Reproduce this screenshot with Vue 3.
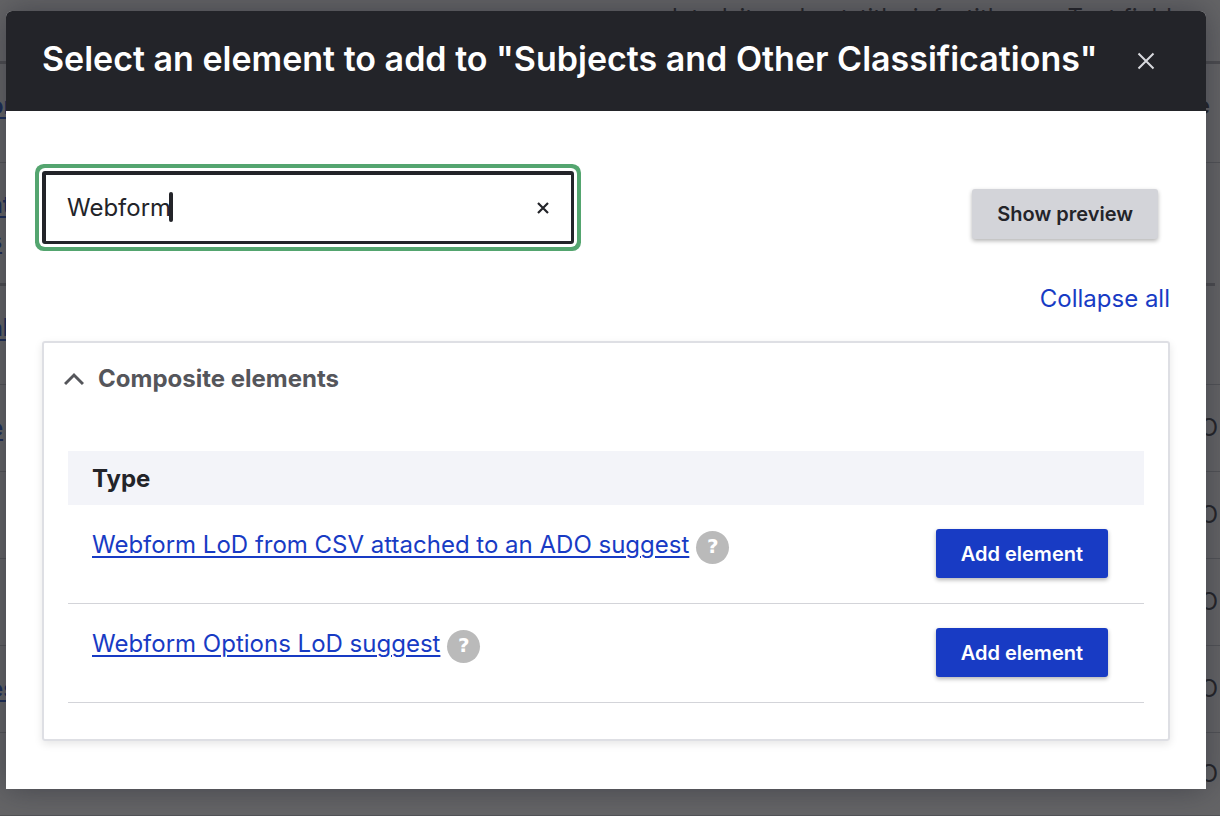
<script setup>
import { ref, computed } from 'vue'

const query = ref('Webform')
const open = ref(true)

const elements = [
  'Webform LoD from CSV attached to an ADO suggest',
  'Webform Options LoD suggest',
]

const shown = computed(() =>
  elements.filter((name) => name.toLowerCase().includes(query.value.toLowerCase()))
)

const pageRows = [
  { kind: 'first', link: '', key: 'related_item_host_title_info_title', type: 'Text field', end: '' },
  { kind: 'group', link: 'or', end: 'e' },
  { kind: 'heading', link: 'at s', end: '' },
  { kind: 'group', link: 'al', end: '' },
  { kind: 'item', link: 'e', end: 'O' },
  { kind: 'item', link: '', end: 'O' },
  { kind: 'item', link: '', end: 'O' },
  { kind: 'item', link: 'es', end: 'O' },
  { kind: 'last', link: '', end: 'O' },
]
</script>

<template>
  <div class="screen">
    <div class="page" aria-hidden="true">
      <div v-for="(row, i) in pageRows" :key="i" class="page-row" :class="row.kind">
        <span class="page-link">{{ row.link }}</span>
        <span v-if="row.key" class="page-key">{{ row.key }}</span>
        <span v-if="row.type" class="page-type">{{ row.type }}</span>
        <span v-if="row.end" class="page-end">{{ row.end }}</span>
      </div>
    </div>

    <div class="overlay">
      <section class="dialog" role="dialog" aria-labelledby="dialog-title">
        <header class="titlebar">
          <h1 id="dialog-title">Select an element to add to "Subjects and Other Classifications"</h1>
          <button class="close" type="button" aria-label="Close">
            <svg width="18" height="18" viewBox="0 0 18 18" fill="none" stroke="#d8d9de" stroke-width="2">
              <path d="M1.5 1.5 16.5 16.5M16.5 1.5 1.5 16.5" />
            </svg>
          </button>
        </header>

        <div class="content">
          <div class="toolbar">
            <div class="search">
              <input v-model="query" type="text" aria-label="Filter by element name" />
              <span class="caret"></span>
              <button class="clear" type="button" aria-label="Clear" @click="query = ''">
                <svg width="12" height="12" viewBox="0 0 12 12" fill="none" stroke="#232429" stroke-width="2.2">
                  <path d="M1 1 11 11M11 1 1 11" />
                </svg>
              </button>
            </div>
            <button class="preview" type="button">Show preview</button>
          </div>

          <div class="toggle">
            <button type="button" @click="open = !open">Collapse all</button>
          </div>

          <section class="group">
            <button class="summary" type="button" :aria-expanded="open" @click="open = !open">
              <svg width="20" height="14" viewBox="0 0 20 14" fill="none" stroke="#55565b" stroke-width="3">
                <path d="M1 12 10 3 19 12" />
              </svg>
              <span>Composite elements</span>
            </button>
            <table v-if="open">
              <thead>
                <tr>
                  <th scope="col">Type</th>
                  <th class="operations"></th>
                </tr>
              </thead>
              <tbody>
                <tr v-for="name in shown" :key="name">
                  <td>
                    <div class="name">
                      <a href="#">{{ name }}</a>
                      <button class="help" type="button" aria-label="Help">?</button>
                    </div>
                  </td>
                  <td class="operations">
                    <button class="add" type="button">Add element</button>
                  </td>
                </tr>
              </tbody>
            </table>
          </section>
        </div>
      </section>
    </div>
  </div>
</template>

<style>
body {
  margin: 0;
}
</style>

<style scoped>
.screen {
  position: relative;
  height: 100vh;
  overflow: hidden;
  background: #fff;
  color: #232429;
  font-family: Inter, "Liberation Sans", sans-serif;
  font-size: 24px;
  line-height: 36px;
}
button {
  margin: 0;
  padding: 0;
  border: 0;
  background: none;
  color: inherit;
  font: inherit;
  cursor: pointer;
}
svg {
  display: block;
}

.page-row {
  box-sizing: border-box;
  display: flex;
  align-items: center;
  height: 87px;
  padding-right: 2px;
  border-bottom: 1px solid #c4c5ca;
}
.page-row.first {
  height: 64px;
  align-items: flex-start;
  padding-right: 48px;
  border-bottom: 3px solid #adaeb3;
}
.page-row.group {
  height: 99px;
  padding-bottom: 14px;
}
.page-row.heading {
  height: 123px;
  margin-right: 5px;
  border-bottom: 3px solid #adaeb3;
}
.page-row.last {
  height: 83px;
}
.page-link {
  width: 20px;
  margin-left: -11px;
  color: #003ecc;
  font-weight: 600;
  text-decoration: underline;
  text-underline-offset: 3px;
}
.page-key {
  margin-left: auto;
}
.page-type {
  margin-left: 60px;
}
.page-end {
  margin-left: auto;
}
.group .page-end {
  padding-right: 8px;
  font-weight: 600;
}

.overlay {
  box-sizing: border-box;
  position: absolute;
  inset: 0;
  padding: 11px 14px 27px 6px;
  background: rgba(35, 36, 38, 0.7);
}
.dialog {
  border-radius: 6px 6px 0 0;
  background: #fff;
  box-shadow: 0 0 32px rgba(34, 35, 48, 0.5);
}
.titlebar {
  box-sizing: border-box;
  display: flex;
  align-items: center;
  justify-content: space-between;
  min-height: 100px;
  padding: 0 50px 0 36px;
  border-radius: 6px 6px 0 0;
  background: #232429;
  color: #fff;
}
h1 {
  margin: 0;
  padding-bottom: 4px;
  font-size: 34px;
  font-weight: 600;
  line-height: 48px;
}
.close {
  flex: none;
  padding: 1px;
}
.content {
  padding: 60px 36px 48px;
}
.toolbar {
  display: flex;
  justify-content: space-between;
  align-items: flex-start;
}
.search {
  position: relative;
  flex: 0 1 532px;
}
.search input {
  box-sizing: border-box;
  display: block;
  width: 100%;
  height: 73px;
  padding: 0 60px 2px 21px;
  border: 3px solid #232429;
  border-width: 4px 3px 3px 4px;
  border-radius: 3px;
  outline: 0;
  background: #fff;
  box-shadow: 0 0 0 3px #fff, 0 0 0 7px #54a56f;
  color: #232429;
  caret-color: transparent;
  font: inherit;
}
.caret {
  position: absolute;
  top: 21px;
  left: 127px;
  width: 4px;
  height: 30px;
  border-radius: 2px;
  background: #232429;
}
.clear {
  position: absolute;
  top: 31px;
  right: 25px;
}
.preview {
  height: 50px;
  margin: 18px 12px 0 0;
  padding: 0 25px 1px;
  border-radius: 3px;
  background: #d3d4d9;
  box-shadow: 0 2px 4px rgba(0, 0, 0, 0.3);
  font-size: 20px;
  font-weight: 600;
}
.toggle {
  display: flex;
  justify-content: flex-end;
  padding: 37px 0 24px;
  color: #183bc4;
}
section.group {
  padding: 0 24px 36px;
  border: 2px solid #dedfe4;
  border-radius: 3px;
  box-shadow: 0 3px 8px rgba(0, 0, 0, 0.1);
}
.summary {
  display: flex;
  align-items: center;
  gap: 14px;
  width: 100%;
  margin-left: -4px;
  padding: 18px 0 54px;
  color: #55565b;
  font-weight: 700;
}
table {
  width: 100%;
  border-collapse: collapse;
}
th {
  height: 52px;
  padding: 2px 24px 0;
  background: #f3f4f9;
  font-weight: 700;
  text-align: left;
}
td {
  height: 50px;
  padding: 24px;
  border-bottom: 1px solid #d3d4d9;
  vertical-align: top;
}
.operations {
  padding-right: 36px;
  text-align: right;
}
.name {
  display: flex;
  align-items: center;
  gap: 7px;
  height: 36px;
}
a {
  padding-bottom: 4px;
  color: #183bc4;
  text-decoration: underline;
  text-decoration-thickness: 2px;
  text-underline-offset: 3px;
}
.help {
  flex: none;
  width: 33px;
  height: 33px;
  padding-bottom: 2px;
  border-radius: 50%;
  background: #bababa;
  color: #fff;
  font-family: "DejaVu Sans", sans-serif;
  font-size: 20px;
  font-weight: 700;
  line-height: 30px;
}
.add {
  display: inline-block;
  height: 49px;
  padding: 0 25px;
  border-radius: 3px;
  background: #183bc4;
  box-shadow: 0 2px 4px rgba(0, 0, 0, 0.3);
  color: #fff;
  font-size: 20px;
  font-weight: 600;
  vertical-align: top;
}
</style>
